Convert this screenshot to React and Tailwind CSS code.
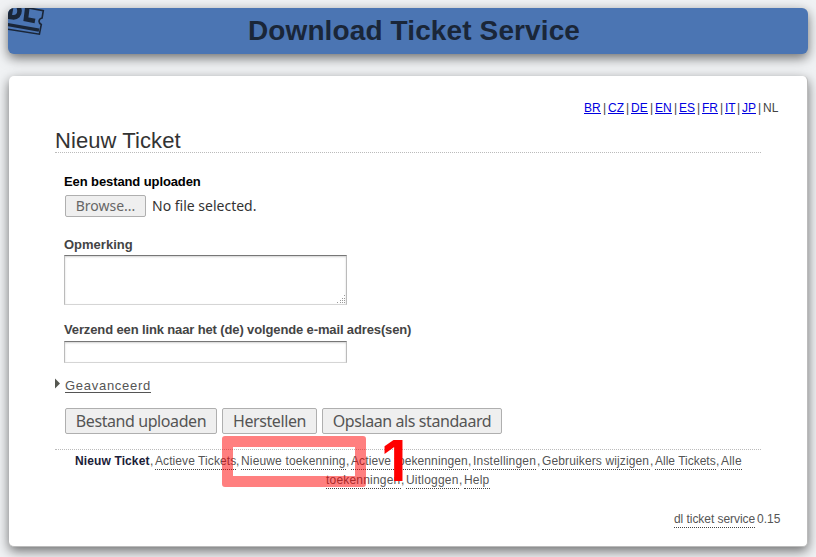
import React from 'react';

const languages = [
  ['BR', 'w-[17px] mr-[7px]'],
  ['CZ', 'w-[16px] mr-[7px]'],
  ['DE', 'w-[17px] mr-[7px]'],
  ['EN', 'w-[17px] mr-[7px]'],
  ['ES', 'w-[16px] mr-[7px]'],
  ['FR', 'w-[16px] mr-[7px]'],
  ['IT', 'w-[10px] mr-[7px]'],
  ['JP', 'w-[14px] mr-[7px]'],
];

function Logo() {
  return (
    <svg className="block" width="40" height="32" viewBox="0 0 40 32" fill="none" stroke="#1a2638">
      <path d="M-2 -4L35.3 2.6L34.1 10C30.6 10.6 29.8 14.8 33.3 16.4L31.4 26.2L-2 20.9" strokeWidth="1.6" />
      <path d="M-1 16.5L31 22.2" strokeWidth="3.3" />
      <path d="M3.4 -2L1.4 8.8L4.6 9.3C9.2 9.8 11.7 6.6 11.5 2.6L10.8 -1" strokeWidth="4.6" />
      <path d="M19.4 -1L17.9 11.2L27 12.9" strokeWidth="4.6" />
    </svg>
  );
}

function Button({ className, children }) {
  return (
    <button className={`flex h-[26px] items-center justify-center whitespace-nowrap rounded-[2px] border border-[#afafaf] bg-[#efefef] font-['Noto_Sans',sans-serif] text-[16px] leading-[22px] tracking-[-0.42px] text-[#555] ${className}`}>
      {children}
    </button>
  );
}

function NavLink({ className, comma = true, children }) {
  return (
    <span className="flex">
      <a className={`block h-[17px] whitespace-nowrap border-b border-dotted border-[#444] leading-[17px] ${className}`}>{children}</a>
      {comma && <span className="w-[5px] leading-[17px]">,</span>}
    </span>
  );
}

export default function App() {
  return (
    <div className="h-[557px] w-[816px] overflow-hidden bg-[#f0f2f4] pt-2 font-['Liberation_Sans',sans-serif] text-[12px] text-[#444]">
      <header className="relative mx-2 flex h-[46px] justify-center overflow-visible rounded-[6px] bg-[#4b75b3] pl-[12px] shadow-[0_4px_12px_rgba(0,0,0,0.55)]">
        <div className="absolute left-0 top-0 overflow-hidden rounded-tl-[6px]"><Logo /></div>
        <h1 className="whitespace-nowrap text-[28px] font-bold leading-[46px] tracking-[0.12px] text-[#1a2638]">Download Ticket Service</h1>
      </header>

      <main className="relative ml-[9px] mt-[22px] flex h-[471px] w-[799px] flex-col rounded-[5px] border-b border-r border-[#bbb] bg-white shadow-[0_4px_12px_rgba(0,0,0,0.55)]">
        <nav className="mr-[28px] mt-[25px] flex h-[14px] justify-end leading-[14px]">
          {languages.map(([code, size]) => (
            <span key={code} className="flex">
              <a className={`block h-[13px] whitespace-nowrap border-b border-[#0000e0] leading-[14px] text-[#0000e0] ${size} relative`}>
                {code}
                <span className="absolute left-full top-0 w-[7px] text-center text-[#444]">|</span>
              </a>
            </span>
          ))}
          <span className="w-[16px]">NL</span>
        </nav>

        <h2 className="ml-[46px] mt-[12px] h-[26px] w-[706px] whitespace-nowrap border-b border-dotted border-[#bbb] text-[22px] leading-[27px] tracking-[0.08px] text-[#333]">Nieuw Ticket</h2>

        <form className="ml-[55px] flex flex-col items-start">
          <label className="mt-[21px] h-[16px] whitespace-nowrap text-[13px] font-bold leading-[16px] tracking-[-0.1px] text-black">Een bestand uploaden</label>
          <div className="ml-[1px] mt-[5px] flex h-[22px] items-center font-['Noto_Sans',sans-serif] text-[14px] text-[#333]">
            <span className="flex h-[22px] w-[81px] items-center justify-center rounded-[2px] border border-[#afafaf] bg-[#efefef] pb-[1px] text-[#666]">Browse...</span>
            <span className="ml-[6px] whitespace-nowrap pb-[1px]">No file selected.</span>
          </div>
          <label className="mt-[20px] h-[16px] whitespace-nowrap text-[13px] font-bold leading-[16px] text-[#444]">Opmerking</label>
          <div className="mt-[2px] flex h-[50px] w-[283px] items-end justify-end border border-[#bbb] border-b-[#d5d5d5] border-t-[#777] bg-white shadow-[inset_0_1px_2px_rgba(0,0,0,0.18)]">
            <svg width="9" height="9" viewBox="0 0 9 9" fill="#999">
              <path d="M7 0h1v1h-1zM5 3h1v1h-1zM7 3h1v1h-1zM3 5h1v1h-1zM5 5h1v1h-1zM7 5h1v1h-1zM0 7h1v1h-1zM3 7h1v1h-1zM5 7h1v1h-1zM7 7h1v1h-1z" />
            </svg>
          </div>
          <label className="mt-[17px] h-[16px] whitespace-nowrap text-[13px] font-bold leading-[16px] tracking-[-0.13px] text-[#444]">Verzend een link naar het (de) volgende e-mail adres(sen)</label>
          <div className="mt-[3px] h-[22px] w-[283px] border border-[#bbb] border-b-[#d5d5d5] border-t-[#777] bg-white shadow-[inset_0_1px_2px_rgba(0,0,0,0.18)]" />
          <div className="-ml-[9px] mt-[14px] flex h-[16px] items-start">
            <svg className="mt-[1px]" width="10" height="12" viewBox="0 0 10 12"><path d="M0 .5L5 5.5L0 10.5Z" fill="#555750" /></svg>
            <span className="h-[16px] w-[86px] whitespace-nowrap border-b border-[#555] text-[13px] leading-[17px] tracking-[0.72px] text-[#555]">Geavanceerd</span>
          </div>
          <div className="ml-[1px] mt-[15px] flex gap-[5px]">
            <Button className="w-[152px]">Bestand uploaden</Button>
            <Button className="w-[95px]">Herstellen</Button>
            <Button className="w-[180px]">Opslaan als standaard</Button>
          </div>
        </form>

        <footer className="ml-[46px] mt-[15px] w-[706px] border-t border-dotted border-[#bbb] text-[#555]">
          <div className="ml-[20px] mt-[3px] flex h-[19px]">
            <span className="w-[75px] whitespace-nowrap font-bold leading-[17px] tracking-[0.12px] text-[#1a2038]">Nieuw Ticket</span>
            <span className="w-[5px] leading-[17px]">,</span>
            <NavLink className="w-[81px] tracking-[0.08px]">Actieve Tickets</NavLink>
            <NavLink className="w-[105px] tracking-[0.15px]">Nieuwe toekenning</NavLink>
            <NavLink className="w-[117px] tracking-[0.1px]">Actieve toekenningen</NavLink>
            <NavLink className="mr-[1px] w-[63px] tracking-[0.2px]">Instellingen</NavLink>
            <NavLink className="w-[108px] tracking-[0.13px]">Gebruikers wijzigen</NavLink>
            <NavLink className="w-[61px]">Alle Tickets</NavLink>
            <NavLink className="w-[21px] tracking-[0.2px]" comma={false}>Alle</NavLink>
          </div>
          <div className="ml-[271px] flex h-[19px]">
            <NavLink className="w-[75px] tracking-[0.2px]">toekenningen</NavLink>
            <NavLink className="w-[53px] tracking-[0.2px]">Uitloggen</NavLink>
            <NavLink className="w-[26px] tracking-[0.2px]" comma={false}>Help</NavLink>
          </div>
          <div className="ml-[619px] mt-[20px] flex whitespace-nowrap">
            <NavLink className="mr-[2px] w-[81px] tracking-[-0.05px]" comma={false}>dl ticket service</NavLink>
            <span className="leading-[17px]">0.15</span>
          </div>
        </footer>

        <div className="absolute left-[213px] top-[360px] h-[51px] w-[144px] rounded-[3px] border-[11px] border-[#ff0000]/50" />
        <div className="absolute left-[373px] top-[356px] font-['Inter',sans-serif] text-[56px] font-bold leading-[58px] text-[#ff0000]">1</div>
      </main>
    </div>
  );
}
